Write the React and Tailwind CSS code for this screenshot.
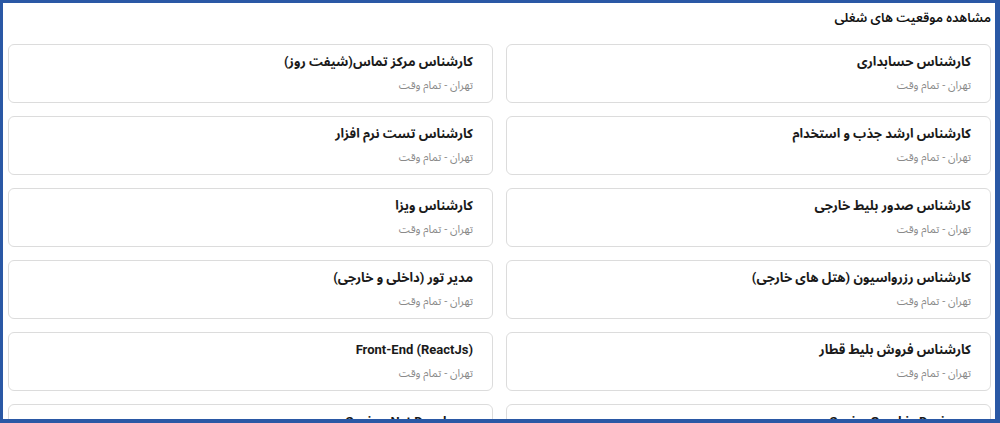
import React from 'react';

const jobs = [
  'کارشناس حسابداری',
  'کارشناس مرکز تماس(شیفت روز)',
  'کارشناس ارشد جذب و استخدام',
  'کارشناس تست نرم افزار',
  'کارشناس صدور بلیط خارجی',
  'کارشناس ویزا',
  'کارشناس رزرواسیون (هتل های خارجی)',
  'مدیر تور (داخلی و خارجی)',
  'کارشناس فروش بلیط قطار',
  'Front-End (ReactJs)',
  'Senior Graphic Designer',
  'Senior .Net Developer',
];

const JobCard = ({ title }) => (
  <div className="h-[59px] rounded-[6px] border border-[#dcdcdc] bg-white pr-[19px] pt-[7px]">
    <div className="text-[13px] leading-[20px] font-bold text-[#1a1a1a]">{title}</div>
    <div className="mt-[5px] text-[11px] leading-[18px] text-[#8a8a8a]">تهران - تمام وقت</div>
  </div>
);

export default function App() {
  return (
    <div
      dir="rtl"
      className="h-[423px] w-[1000px] overflow-hidden border-t-[3px] border-l-[3px] border-r-[5px] border-b-[4px] border-[#2a58a5] bg-white"
      style={{ fontFamily: 'Roboto, "Noto Sans Arabic", "DejaVu Sans", sans-serif' }}
    >
      <div className="pt-[5px] pr-[4px] pl-[5px]">
        <h1 className="mb-[16px] text-[13px] leading-[20px] font-semibold text-[#111]">
          مشاهده موقعیت های شغلی
        </h1>
        <div className="grid grid-cols-2 gap-[13px]">
          {jobs.map((job) => (
            <JobCard key={job} title={job} />
          ))}
        </div>
      </div>
    </div>
  );
}
